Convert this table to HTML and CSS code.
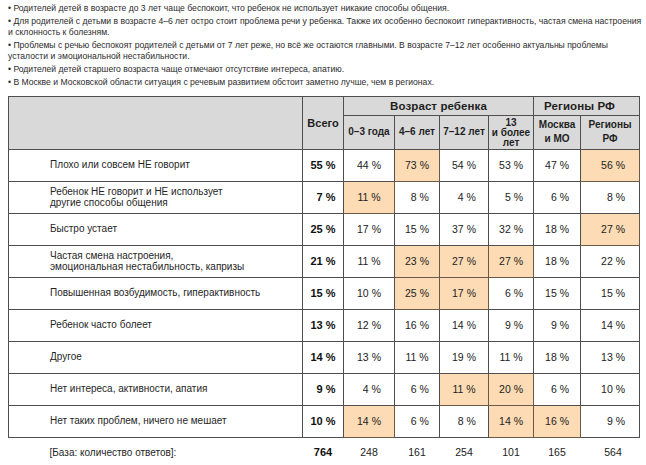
FILE: index.html
```html
<!DOCTYPE html>
<html lang="ru">
<head>
<meta charset="utf-8">
<link rel="stylesheet" href="styles.css">
</head>
<body>
<div class="page">
  <div class="notes">
    <p>• Родителей детей в возрасте до 3 лет чаще беспокоит, что ребенок не использует никакие способы общения.</p>
    <p>• Для родителей с детьми в возрасте 4–6 лет остро стоит проблема речи у ребенка. Также их особенно беспокоит гиперактивность, частая смена настроения<br>и склонность к болезням.</p>
    <p>• Проблемы с речью беспокоят родителей с детьми от 7 лет реже, но всё же остаются главными. В возрасте 7–12 лет особенно актуальны проблемы<br>усталости и эмоциональной нестабильности.</p>
    <p>• Родителей детей старшего возраста чаще отмечают отсутствие интереса, апатию.</p>
    <p>• В Москве и Московской области ситуация с речевым развитием обстоит заметно лучше, чем в регионах.</p>
  </div>
  <table class="data">
    <colgroup>
      <col class="c-label"><col class="c-total"><col class="c-a1"><col class="c-a2"><col class="c-a3"><col class="c-a4"><col class="c-r1"><col class="c-r2">
    </colgroup>
    <thead>
      <tr class="h1">
        <th class="hl" rowspan="2"></th>
        <th class="ht" rowspan="2">Всего</th>
        <th class="hg" colspan="4">Возраст ребенка</th>
        <th class="hg hreg" colspan="2">Регионы РФ</th>
      </tr>
      <tr class="h2">
        <th class="hs">0–3 года</th>
        <th class="hs">4–6 лет</th>
        <th class="hs">7–12 лет</th>
        <th class="hs tight">13<br>и более<br>лет</th>
        <th class="hs">Москва<br>и МО</th>
        <th class="hs">Регионы<br>РФ</th>
      </tr>
    </thead>
    <tbody>
      <tr class="row">
        <td class="lbl">Плохо или совсем НЕ говорит</td>
        <td class="tot">55 %</td><td>44 %</td><td class="hi">73 %</td><td>54 %</td><td>53 %</td><td>47 %</td><td class="last hi">56 %</td>
      </tr>
      <tr class="row">
        <td class="lbl">Ребенок НЕ говорит и НЕ использует<br>другие способы общения</td>
        <td class="tot one">7 %</td><td class="hi">11 %</td><td class="one">8 %</td><td class="one">4 %</td><td class="one">5 %</td><td class="one">6 %</td><td class="last one">8 %</td>
      </tr>
      <tr class="row">
        <td class="lbl">Быстро устает</td>
        <td class="tot">25 %</td><td>17 %</td><td>15 %</td><td>37 %</td><td>32 %</td><td>18 %</td><td class="last hi">27 %</td>
      </tr>
      <tr class="row">
        <td class="lbl">Частая смена настроения,<br>эмоциональная нестабильность, капризы</td>
        <td class="tot">21 %</td><td>11 %</td><td class="hi">23 %</td><td class="hi">27 %</td><td class="hi">27 %</td><td>18 %</td><td class="last">22 %</td>
      </tr>
      <tr class="row">
        <td class="lbl">Повышенная возбудимость, гиперактивность</td>
        <td class="tot">15 %</td><td>10 %</td><td class="hi">25 %</td><td class="hi">17 %</td><td class="one">6 %</td><td>15 %</td><td class="last">15 %</td>
      </tr>
      <tr class="row">
        <td class="lbl">Ребенок часто болеет</td>
        <td class="tot">13 %</td><td>12 %</td><td>16 %</td><td>14 %</td><td class="one">9 %</td><td class="one">9 %</td><td class="last">14 %</td>
      </tr>
      <tr class="row">
        <td class="lbl">Другое</td>
        <td class="tot">14 %</td><td>13 %</td><td>11 %</td><td>19 %</td><td>11 %</td><td>18 %</td><td class="last">13 %</td>
      </tr>
      <tr class="row">
        <td class="lbl">Нет интереса, активности, апатия</td>
        <td class="tot one">9 %</td><td class="one">4 %</td><td class="one">6 %</td><td class="hi">11 %</td><td class="hi">20 %</td><td class="one">6 %</td><td class="last">10 %</td>
      </tr>
      <tr class="row">
        <td class="lbl">Нет таких проблем, ничего не мешает</td>
        <td class="tot">10 %</td><td class="hi">14 %</td><td class="one">6 %</td><td class="one">8 %</td><td class="hi">14 %</td><td class="hi">16 %</td><td class="last one">9 %</td>
      </tr>
    </tbody>
    <tfoot>
      <tr class="foot">
        <td class="lbl">[База: количество ответов]:</td>
        <td class="tot">764</td><td>248</td><td>161</td><td>254</td><td>101</td><td>165</td><td class="last">564</td>
      </tr>
    </tfoot>
  </table>
</div>
</body>
</html>
```

FILE: styles.css
```css
html, body {
  margin: 0;
  padding: 0;
  background: #ffffff;
}

.page {
  padding: 3px 7px 0 8px;
  font-family: "Liberation Sans", Arial, sans-serif;
  color: #222222;
}

.notes {
  font-size: 8.6px;
  line-height: 11.3px;
  color: #2b2b2b;
  white-space: nowrap;
  margin-bottom: 7.5px;
}

.notes p {
  margin: 0 0 1.5px 0;
}

.data {
  border-collapse: collapse;
  table-layout: fixed;
  width: 631px;
  font-size: 10.5px;
}

.c-label { width: 294px; }
.c-total { width: 41px; }
.c-a1 { width: 51px; }
.c-a2 { width: 45px; }
.c-a3 { width: 49px; }
.c-a4 { width: 45px; }
.c-r1 { width: 47px; }
.c-r2 { width: 59px; }

.data th {
  background: #d9d9d9;
  border: 1px solid #4f4f4f;
  font-weight: bold;
  padding: 0;
  color: #1f1f1f;
  text-align: center;
  vertical-align: middle;
}

.h1 { height: 19px; }
.h2 { height: 34px; }

.ht { font-size: 11px; }
.hg { font-size: 11.5px; letter-spacing: 0.1px; }
.hreg { padding-right: 14px !important; }

.hs {
  font-size: 10px;
  line-height: 14px;
}

.hs.tight {
  line-height: 10px;
  padding-top: 1px !important;
}

.data td {
  border: 1px solid #4f4f4f;
  padding: 0;
  text-align: center;
  vertical-align: middle;
  color: #222222;
}

.row { height: 32px; }

.data td.lbl {
  text-align: left;
  padding-left: 41px;
  font-size: 10px;
  line-height: 11.5px;
  color: #262626;
}

.data td.tot {
  font-weight: bold;
  font-size: 11px;
  color: #111111;
}

.data td.one {
  padding-left: 0.556em;
}

.data td.last {
  padding-left: 6px;
}

.data td.last.one {
  padding-left: calc(6px + 0.556em);
}

.data td.hi {
  background: #fddbb4;
  border-color: #6b5a48;
}

.foot { height: 30px; }

.foot td,
.data .foot td.lbl {
  border: none;
  font-size: 10.5px;
}

.data .foot td.lbl {
  font-size: 10px;
}
```
